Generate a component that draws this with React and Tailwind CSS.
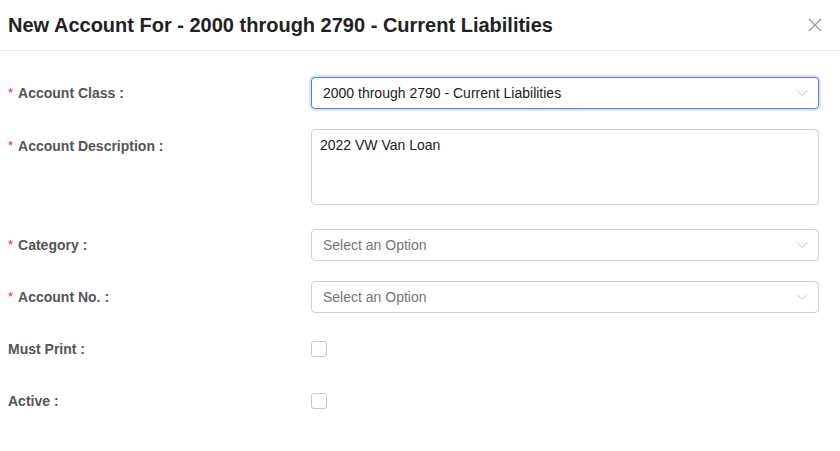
import React from "react";

function Chevron() {
  return (
    <svg width="12" height="8" viewBox="0 0 12 8" className="shrink-0">
      <path d="M1 1.5 L6 6.5 L11 1.5" fill="none" stroke="#c4c4c4" strokeWidth="1" />
    </svg>
  );
}

function Label({ required, children }) {
  return (
    <div className="w-[303px] shrink-0 flex items-center text-[14px] font-bold text-[#555]">
      {required && <span className="text-[#f5222d] mr-[5px] text-[13px] font-normal">*</span>}
      <span>{children}</span>
    </div>
  );
}

function SelectBox({ value, placeholder, focused }) {
  return (
    <div
      className={`w-[508px] h-[32px] flex items-center justify-between pl-[11px] pr-[10px] rounded-[4px] border bg-white text-[14px] ${
        focused ? "border-[#4d7cfe] shadow-[0_0_0_2px_rgba(77,124,254,0.2)]" : "border-[#d0d0d0]"
      }`}
    >
      <span className={value ? "text-[#222]" : "text-[#757575]"}>{value || placeholder}</span>
      <Chevron />
    </div>
  );
}

function Checkbox() {
  return <div className="w-[16px] h-[16px] rounded-[3px] border border-[#c9c9c9] bg-white" />;
}

export default function App() {
  return (
    <div className="w-[840px] h-[451px] bg-white font-['Liberation_Sans',Arial,sans-serif]">
      <div className="h-[51px] border-b border-[#ececec] flex items-center justify-between pl-[8px] pr-[18px]">
        <h1 className="text-[20px] font-bold text-[#222]">
          New Account For - 2000 through 2790 - Current Liabilities
        </h1>
        <svg width="14" height="14" viewBox="0 0 14 14">
          <path d="M1 1 L13 13 M13 1 L1 13" stroke="#999" strokeWidth="1.3" fill="none" />
        </svg>
      </div>

      <div className="pl-[8px] pt-[26px] flex flex-col">
        <div className="flex h-[32px]">
          <Label required>Account Class :</Label>
          <SelectBox value="2000 through 2790 - Current Liabilities" focused />
        </div>

        <div className="flex mt-[20px]">
          <div className="w-[303px] shrink-0 flex items-start pt-[7px] text-[14px] font-bold text-[#555]">
            <span className="text-[#f5222d] mr-[5px] text-[13px] font-normal">*</span>
            <span>Account Description :</span>
          </div>
          <textarea
            defaultValue="2022 VW Van Loan"
            className="w-[508px] h-[76px] resize-none rounded-[4px] border border-[#d0d0d0] px-[8px] py-[5px] text-[14px] text-[#222] outline-none font-['Liberation_Sans',Arial,sans-serif]"
          />
        </div>

        <div className="flex h-[32px] mt-[24px]">
          <Label required>Category :</Label>
          <SelectBox placeholder="Select an Option" />
        </div>

        <div className="flex h-[32px] mt-[20px]">
          <Label required>Account No. :</Label>
          <SelectBox placeholder="Select an Option" />
        </div>

        <div className="flex h-[32px] mt-[20px] items-center">
          <Label>Must Print :</Label>
          <Checkbox />
        </div>

        <div className="flex h-[32px] mt-[20px] items-center">
          <Label>Active :</Label>
          <Checkbox />
        </div>
      </div>
    </div>
  );
}
